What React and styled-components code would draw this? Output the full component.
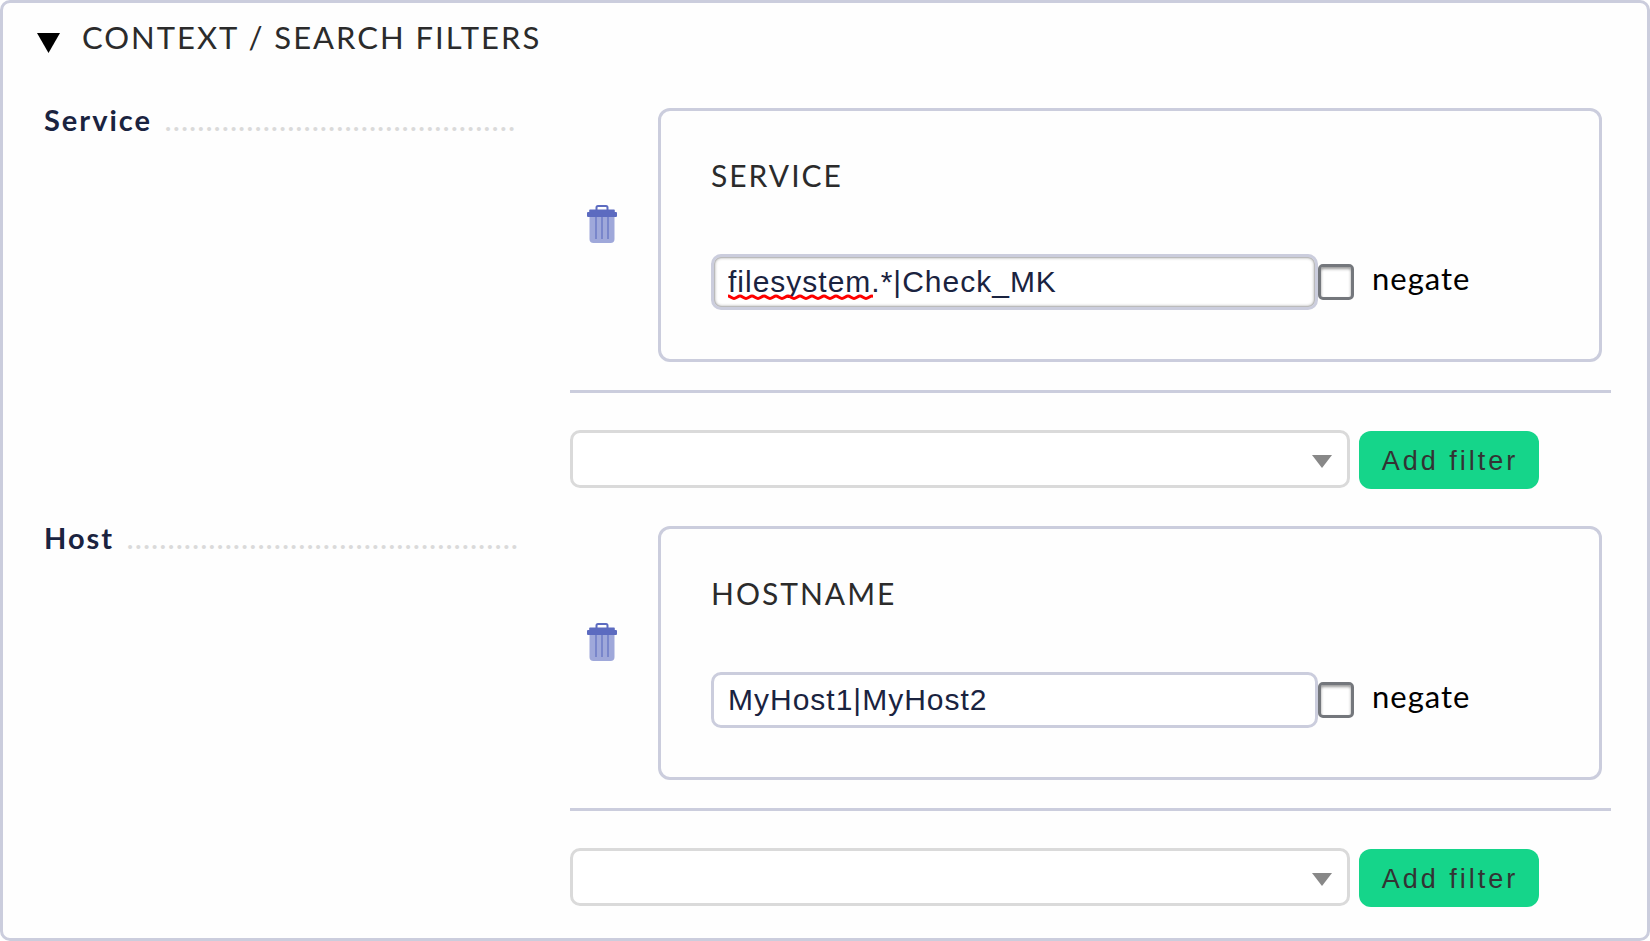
import React, { useId, useState } from 'react';
import styled, { createGlobalStyle } from 'styled-components';

const Global = createGlobalStyle`
  *, *::before, *::after { box-sizing: border-box; }
  html, body, #root { height: 100%; }
  body { margin: 0; background: #fff; font-family: Lato, sans-serif; }
`;

const Panel = styled.main`
  min-height: 100%;
  padding: 16px 36px 31px 34px;
  border: 3px solid #cbcddd;
  border-radius: 10px;
  background: #fefefe;
`;

const PanelHeader = styled.button`
  display: flex;
  align-items: flex-start;
  gap: 22px;
  margin: 0;
  padding: 0;
  border: 0;
  background: none;
  font: 31px/36px Lato, sans-serif;
  letter-spacing: 2px;
  color: #2b2b2b;
  text-transform: uppercase;
`;

const Caret = styled.svg`
  width: 23px;
  height: 20px;
  margin-top: 14px;
`;

const Sections = styled.div`
  display: flex;
  flex-direction: column;
  gap: 37px;
  margin-top: 53px;
  padding-left: 7px;
`;

const Section = styled.section`
  display: grid;
  grid-template-columns: 478px minmax(0, 1fr);
  column-gap: 48px;
`;

const SectionLabel = styled.h2`
  display: flex;
  gap: 13px;
  margin: 0;
  font: bold 29px/24px Lato, sans-serif;
  letter-spacing: 2px;
  color: #1a2340;
`;

const Dots = styled.span`
  font-size: 26px;
  line-height: 26px;
  white-space: nowrap;
  color: #dadada;
`;

const FilterRow = styled.div`
  display: flex;
  padding: 0 9px 28px 17px;
  border-bottom: 3px solid #cbcddd;
`;

const TrashButton = styled.button`
  flex: none;
  align-self: flex-start;
  width: 30px;
  height: 38px;
  margin: 97px 41px 0 0;
  padding: 0;
  border: 0;
  background: none;
`;

const Card = styled.div`
  flex: 1;
  min-width: 0;
  padding: 46px 50px 49px;
  border: 3px solid #cbcddd;
  border-radius: 12px;
`;

const CardTitle = styled.label`
  display: block;
  margin-bottom: 61px;
  font-size: 30px;
  line-height: 36px;
  letter-spacing: 2px;
  color: #2b2b2b;
  text-transform: uppercase;
`;

const FieldRow = styled.div`
  display: flex;
  align-items: center;
`;

const TextField = styled.span`
  position: relative;
  flex: 0 1 607px;
  min-width: 0;
`;

const TextInput = styled.input`
  display: block;
  width: 100%;
  height: 56px;
  padding: 0 ${p => (p.$active ? 14 : 14)}px;
  border: 3px solid #cbcddd;
  border-radius: 10px;
  outline: none;
  background: #fff;
  box-shadow: ${p => (p.$active ? 'inset 0 0 0 1px #bbb, inset 0 0 3px 1px #aaa' : 'none')};
  font: 30px "Liberation Sans", sans-serif;
  letter-spacing: 1px;
  color: #1a2340;
`;

const Squiggle = styled.svg`
  position: absolute;
  left: 17px;
  bottom: 10px;
  width: 145px;
  height: 6px;
  pointer-events: none;
`;

const CheckBox = styled.input`
  appearance: none;
  flex: none;
  width: 36px;
  height: 36px;
  margin: 0;
  border: 3px solid #74777c;
  border-radius: 5px;
  background: #fff;
  box-shadow: inset 0 2px 3px #999;
  &:checked { background: #74777c; }
`;

const CheckLabel = styled.label`
  margin: 0 0 8px 18px;
  font-size: 31px;
  line-height: 36px;
  letter-spacing: 1px;
  color: #000;
`;

const AddRow = styled.div`
  display: flex;
  align-items: flex-end;
  gap: 9px;
  margin-top: 37px;
`;

const SelectBox = styled.span`
  position: relative;
  flex: 0 1 780px;
  min-width: 0;
  padding-bottom: 1px;
`;

const Select = styled.select`
  appearance: none;
  display: block;
  width: 100%;
  height: 58px;
  padding: 0 48px 0 14px;
  border: 3px solid #dadada;
  border-radius: 10px;
  background: #fff;
  font: 28px "Liberation Sans", sans-serif;
  color: #1a2340;
`;

const SelectArrow = styled.svg`
  position: absolute;
  right: 18px;
  top: 25px;
  width: 20px;
  height: 13px;
  pointer-events: none;
`;

const AddButton = styled.button`
  flex: none;
  width: 180px;
  height: 58px;
  padding: 2px 0 0 2px;
  border: 0;
  border-radius: 12px;
  background: #15d58a;
  font: 27px "Liberation Sans", sans-serif;
  letter-spacing: 3px;
  color: #333;
`;

const TrashIcon = () => (
  <svg width="30" height="38" viewBox="0 0 30 38" aria-hidden="true">
    <path d="M2.5 10h25v24a4 4 0 0 1-4 4h-17a4 4 0 0 1-4-4z" fill="#9fa8da" />
    <path d="M9 12v22M15 12v22M21 12v22" stroke="#7986cb" strokeWidth="2" />
    <path d="M9.5 5V2.5a1.5 1.5 0 0 1 1.5-1.5h8a1.5 1.5 0 0 1 1.5 1.5V5" fill="none" stroke="#5c6bc0" strokeWidth="2" />
    <path d="M3 4.5h24q.8 0 .8.8V7h1.2q1 0 1 1v3q0 1-1 1H1q-1 0-1-1V8q0-1 1-1h1.2V5.3q0-.8.8-.8z" fill="#5c6bc0" />
  </svg>
);

const wave = 'M0 2' + Array.from({ length: 13 }, () => 'c2 0 4 2.5 6 2.5s4-2.5 6-2.5').join('');

function FilterSection({ label, title, initial, dots, active }) {
  const id = useId();
  const [value, setValue] = useState(initial);
  return (
    <Section>
      <SectionLabel>
        {label}
        <Dots aria-hidden="true">{'.'.repeat(dots)}</Dots>
      </SectionLabel>
      <div>
        <FilterRow>
          <TrashButton type="button" aria-label={`Remove ${title} filter`}>
            <TrashIcon />
          </TrashButton>
          <Card>
            <CardTitle htmlFor={`${id}text`}>{title}</CardTitle>
            <FieldRow>
              <TextField>
                <TextInput
                  id={`${id}text`}
                  type="text"
                  spellCheck={false}
                  $active={active}
                  value={value}
                  onChange={e => setValue(e.target.value)}
                />
                {active && value === initial && (
                  <Squiggle viewBox="0 0 145 6" aria-hidden="true">
                    <path d={wave} fill="none" stroke="#f00" strokeWidth="3" />
                  </Squiggle>
                )}
              </TextField>
              <CheckBox id={`${id}neg`} type="checkbox" />
              <CheckLabel htmlFor={`${id}neg`}>negate</CheckLabel>
            </FieldRow>
          </Card>
        </FilterRow>
        <AddRow>
          <SelectBox>
            <Select aria-label={`${label} filter to add`} defaultValue="">
              <option value="" />
            </Select>
            <SelectArrow viewBox="0 0 20 13" aria-hidden="true">
              <path d="M0 0h20L10 13z" fill="#888" />
            </SelectArrow>
          </SelectBox>
          <AddButton type="button">Add filter</AddButton>
        </AddRow>
      </div>
    </Section>
  );
}

export default function App() {
  return (
    <>
      <Global />
      <Panel>
        <PanelHeader type="button" aria-expanded="true">
          <Caret viewBox="0 0 23 20" aria-hidden="true">
            <path d="M0 0h23L11.5 20z" />
          </Caret>
          Context / Search Filters
        </PanelHeader>
        <Sections>
          <FilterSection label="Service" title="Service" initial="filesystem.*|Check_MK" dots={43} active />
          <FilterSection label="Host" title="Hostname" initial="MyHost1|MyHost2" dots={48} />
        </Sections>
      </Panel>
    </>
  );
}
